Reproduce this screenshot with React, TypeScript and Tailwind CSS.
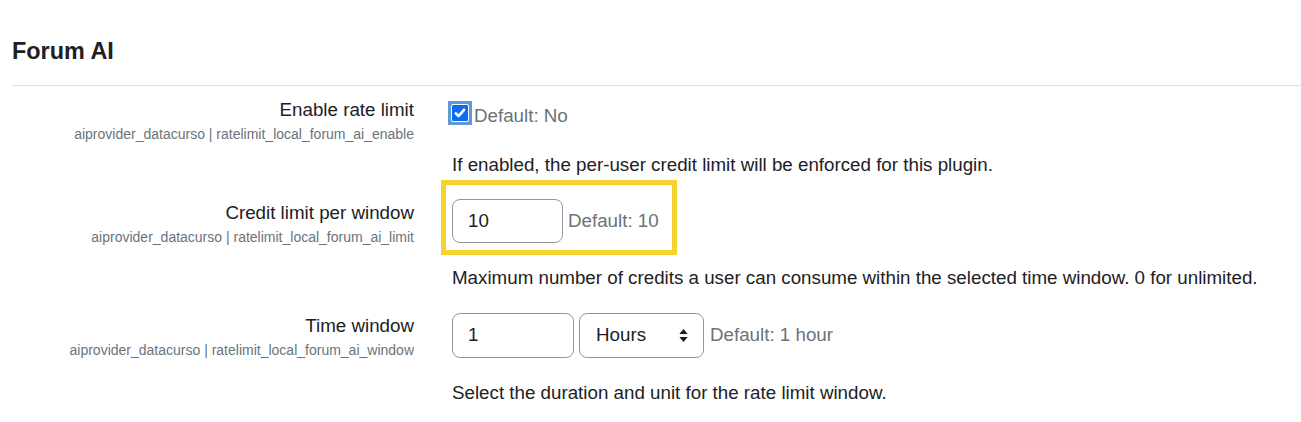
export default function App() {
  const font = { fontFamily: '"Liberation Sans", Arial, sans-serif' };
  return (
    <div className="min-h-[422px] bg-white pl-3 text-[#1d2125]" style={font}>
      {/* Section heading */}
      <h3 className="pt-[37px] text-[23.4px] font-bold leading-[28px]">Forum AI</h3>
      <div className="mt-[20px] border-t border-[#dee2e6]" />

      {/* Enable rate limit */}
      <div className="flex pt-[10px]">
        <div className="w-[402px] text-right">
          <div className="text-[18.75px] leading-[28px]">Enable rate limit</div>
          <div className="text-[14px] leading-[20px] text-[#6a737b]">aiprovider_datacurso | ratelimit_local_forum_ai_enable</div>
        </div>
        <div className="ml-[34px] pt-[5px]">
          <div className="flex items-start">
            <span className="flex h-[24px] w-[24px] items-center justify-center bg-[#5d9ad6]">
              <span className="flex h-[18px] w-[18px] items-center justify-center rounded-[2px] border border-white bg-[#0a6cf0]">
                <svg viewBox="0 0 16 16" className="h-[14px] w-[14px]" fill="none" stroke="white" strokeWidth="3" strokeLinecap="round" strokeLinejoin="round">
                  <path d="M3.2 8.4l3.1 3.1 6.3-7.2" />
                </svg>
              </span>
            </span>
            <span className="ml-[2px] text-[18.75px] leading-[30px] text-[#6a737b]">Default: No</span>
          </div>
          <p className="ml-[4px] mt-[20px] text-[18.75px] leading-[28px]">If enabled, the per-user credit limit will be enforced for this plugin.</p>
        </div>
      </div>

      {/* Credit limit per window */}
      <div className="mt-[1px] flex">
        <div className="w-[402px] pt-[19px] text-right">
          <div className="text-[18.75px] leading-[28px]">Credit limit per window</div>
          <div className="text-[14px] leading-[20px] text-[#6a737b]">aiprovider_datacurso | ratelimit_local_forum_ai_limit</div>
        </div>
        <div className="ml-[38px]">
          <div className="ml-[-11px] inline-flex items-center border-[5px] border-[#f6d32d] pb-[7px] pl-[6px] pr-[13px] pt-[14px]">
            <div className="flex h-[44px] w-[111px] items-center rounded-[8px] border border-[#8f959e] px-[15px] text-[18.75px]">10</div>
            <span className="ml-[5px] text-[18.75px] text-[#6a737b]">Default: 10</span>
          </div>
          <p className="mt-[9px] text-[18.75px] leading-[28px]">Maximum number of credits a user can consume within the selected time window. 0 for unlimited.</p>
        </div>
      </div>

      {/* Time window */}
      <div className="mt-[20px] flex">
        <div className="w-[402px] text-right">
          <div className="text-[18.75px] leading-[28px]">Time window</div>
          <div className="text-[14px] leading-[20px] text-[#6a737b]">aiprovider_datacurso | ratelimit_local_forum_ai_window</div>
        </div>
        <div className="ml-[38px]">
          <div className="flex items-center">
            <div className="flex h-[45px] w-[122px] items-center rounded-[8px] border border-[#8f959e] px-[15px] text-[18.75px]">1</div>
            <div className="ml-[5px] mt-[1px] flex h-[45px] w-[125px] items-center justify-between rounded-[8px] border border-[#8f959e] pl-[16px] pr-[14px] text-[18.75px]">
              <span>Hours</span>
              <svg viewBox="0 0 10 16" className="h-[15px] w-[11px]" fill="#1d2125">
                <path d="M5 1L9.5 6.5H0.5z" />
                <path d="M5 15L9.5 9.5H0.5z" />
              </svg>
            </div>
            <span className="ml-[6px] text-[18.75px] text-[#6a737b]">Default: 1 hour</span>
          </div>
          <p className="mt-[21px] text-[18.75px] leading-[28px]">Select the duration and unit for the rate limit window.</p>
        </div>
      </div>
    </div>
  );
}
